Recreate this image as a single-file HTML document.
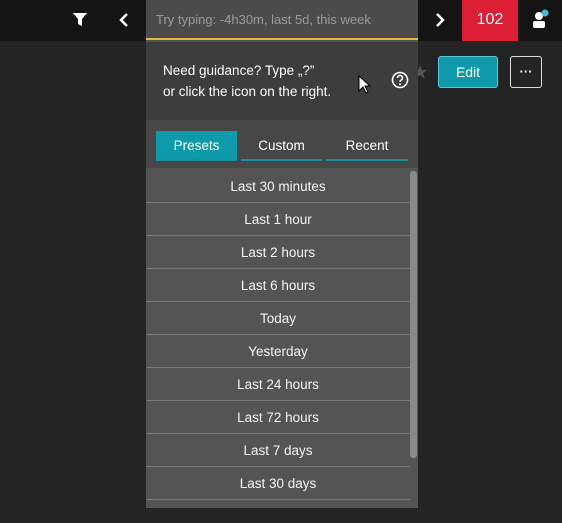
<!DOCTYPE html>
<html><head><style>
*{margin:0;padding:0;box-sizing:border-box}
body{width:562px;height:523px;background:#242424;font-family:"Liberation Sans",sans-serif;position:relative;overflow:hidden;color:#fff}
.top{position:absolute;left:0;top:0;width:562px;height:41px;background:#141414}
.pop{position:absolute;left:146px;top:0;width:272px;height:508px;background:#545454}
.inp{position:absolute;left:0;top:0;width:272px;height:40px;background:#4b4b4b;border-bottom:2px solid #e5b93a;color:#9a9a9a;font-size:13px;padding:12px 0 0 10px}
.guide{position:absolute;left:0;top:42px;width:272px;height:78px;background:#3d3d3d;font-size:13.5px;line-height:21px;padding:18px 0 0 17px}
.tabs{position:absolute;left:0;top:120px;width:272px;height:48px;background:#474747}
.tab{position:absolute;top:11px;height:30px;font-size:13.5px;text-align:center;line-height:30px;border-bottom:2px solid #1a8f9e}
.item{position:absolute;left:0;width:264px;height:33px;border-bottom:1px solid #7a7a7a;text-align:center;line-height:33px;font-size:13.5px;color:#f4f4f4}
.sb{position:absolute;left:264px;top:171px;width:7px;height:287px;background:#8a8a8a;border-radius:3px}
</style></head><body>
<div class="top"></div>
<svg style="position:absolute;left:412px;top:64px" width="16" height="16" viewBox="0 0 16 16"><path d="M8 1l2 5h5l-4 3 2 6-5-4-5 4 2-6-4-3h5z" fill="#555"/></svg>
<svg style="position:absolute;left:72px;top:12px" width="16" height="16" viewBox="0 0 16 16"><path d="M1 1h14l-5 6v7l-4-2V7z" fill="#fff"/></svg>
<svg style="position:absolute;left:118px;top:12px" width="12" height="16" viewBox="0 0 12 16"><path d="M9 2L3 8l6 6" stroke="#fff" stroke-width="2.5" fill="none"/></svg>
<svg style="position:absolute;left:434px;top:12px" width="12" height="16" viewBox="0 0 12 16"><path d="M3 2l6 6-6 6" stroke="#fff" stroke-width="2.5" fill="none"/></svg>
<div style="position:absolute;left:462px;top:0;width:56px;height:41px;background:#dc1f35;font-size:16px;text-align:center;line-height:40px">102</div>
<svg style="position:absolute;left:531px;top:8px" width="20" height="22" viewBox="0 0 20 22"><circle cx="8" cy="8" r="4" fill="#fff"/><rect x="2" y="13" width="12" height="7" rx="2" fill="#fff"/><circle cx="14" cy="5" r="3.5" fill="#4ab8d8"/></svg>
<div style="position:absolute;left:438px;top:56px;width:60px;height:32px;background:#0f9aab;border:1px solid #5fc8d4;border-radius:3px;font-size:14px;text-align:center;line-height:30px">Edit</div>
<div style="position:absolute;left:510px;top:56px;width:32px;height:32px;border:1px solid #ddd;border-radius:3px;font-size:13px;font-weight:bold;text-align:center;line-height:30px">···</div>
<div class="pop">
<div class="inp">Try typing: -4h30m, last 5d, this week</div>
<div class="guide">Need guidance? Type „?”<br>or click the icon on the right.</div>
<svg style="position:absolute;left:245px;top:71px" width="18" height="18" viewBox="0 0 18 18"><circle cx="9" cy="9" r="7.5" stroke="#fff" stroke-width="1.6" fill="none"/><path d="M6.5 7a2.5 2.5 0 1 1 3.5 2.2c-.8.4-1 .9-1 1.6" stroke="#fff" stroke-width="1.6" fill="none"/><circle cx="9" cy="13.2" r="1" fill="#fff"/></svg>
<svg style="position:absolute;left:212px;top:75px" width="14" height="20" viewBox="0 0 14 20"><path d="M1 1v15l4-4 3 6 2-1-3-6h5z" fill="#fff" stroke="#000" stroke-width="1"/></svg>
<div class="tabs">
<div class="tab" style="left:10px;width:81px;background:#0f9aab">Presets</div>
<div class="tab" style="left:95px;width:81px">Custom</div>
<div class="tab" style="left:180px;width:82px">Recent</div>
</div>
<div class="item" style="top:170px">Last 30 minutes</div>
<div class="item" style="top:203px">Last 1 hour</div>
<div class="item" style="top:236px">Last 2 hours</div>
<div class="item" style="top:269px">Last 6 hours</div>
<div class="item" style="top:302px">Today</div>
<div class="item" style="top:335px">Yesterday</div>
<div class="item" style="top:368px">Last 24 hours</div>
<div class="item" style="top:401px">Last 72 hours</div>
<div class="item" style="top:434px">Last 7 days</div>
<div class="item" style="top:467px">Last 30 days</div>
<div class="sb"></div>
</div>
</body></html>
